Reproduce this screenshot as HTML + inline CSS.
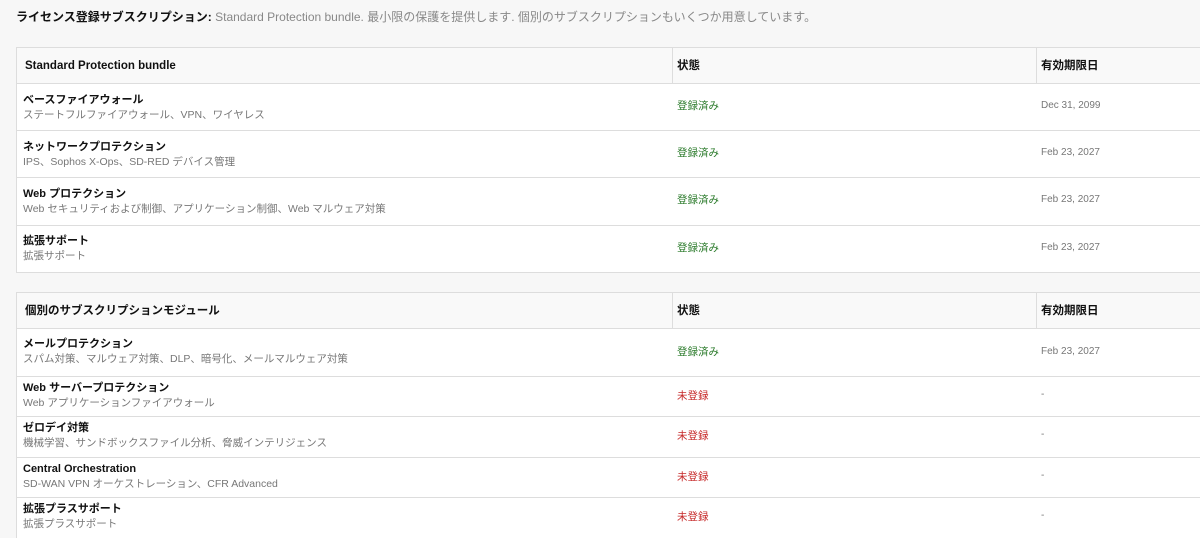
<!DOCTYPE html>
<html><head><meta charset="utf-8"><style>
*{margin:0;padding:0;box-sizing:border-box}
body{width:1200px;height:534px;overflow:hidden;background:#f7f7f7;font-family:"Liberation Sans","Noto Sans CJK JP",sans-serif;color:#111;position:relative}
div,span{line-height:14px}
.h{position:absolute;left:16px;top:10px;font-size:12px;white-space:nowrap}
.h b{font-weight:bold}
.h span{color:#888}
.t{position:absolute;left:16px;width:1200px;background:#fff;border:1px solid #ddd;border-right:none}
.r{position:relative;border-bottom:1px solid #ddd}
.hd{background:#f9f9f9;height:36px;font-weight:bold;font-size:11.5px}
.hd div{position:absolute;top:11px}
.c1{left:8px}.c2{left:660px}.c3{left:1024px}
.hd .ln{position:absolute;top:0;width:1px;height:35px;background:#ddd}
.r .a{position:absolute;left:6px;font-size:11px;font-weight:bold;white-space:nowrap}
.r .s{position:absolute;left:6px;font-size:10.5px;color:#777;white-space:nowrap}
.r .st{position:absolute;left:660px;font-size:10.5px}
.r .d{position:absolute;left:1024px;font-size:10px;color:#777}
.g{color:#2a7a2a}.rd{color:#c62828}
</style></head><body>
<div class="h"><b>ライセンス登録サブスクリプション:</b> <span>Standard Protection bundle. 最小限の保護を提供します. 個別のサブスクリプションもいくつか用意しています。</span></div>

<div class="t" style="top:47px">
<div class="r hd"><div class="c1">Standard Protection bundle</div><span class="ln" style="left:655px"></span><div class="c2">状態</div><span class="ln" style="left:1019px"></span><div class="c3">有効期限日</div></div>
<div class="r" style="height:47px"><div class="a" style="top:9px">ベースファイアウォール</div><div class="s" style="top:24px">ステートフルファイアウォール、VPN、ワイヤレス</div><div class="st g" style="top:15px">登録済み</div><div class="d" style="top:15px">Dec 31, 2099</div></div>
<div class="r" style="height:47px"><div class="a" style="top:9px">ネットワークプロテクション</div><div class="s" style="top:24px">IPS、Sophos X-Ops、SD-RED デバイス管理</div><div class="st g" style="top:15px">登録済み</div><div class="d" style="top:15px">Feb 23, 2027</div></div>
<div class="r" style="height:48px"><div class="a" style="top:9px">Web プロテクション</div><div class="s" style="top:24px">Web セキュリティおよび制御、アプリケーション制御、Web マルウェア対策</div><div class="st g" style="top:15px">登録済み</div><div class="d" style="top:15px">Feb 23, 2027</div></div>
<div class="r" style="height:46px;border-bottom:none"><div class="a" style="top:8px">拡張サポート</div><div class="s" style="top:23px">拡張サポート</div><div class="st g" style="top:15px">登録済み</div><div class="d" style="top:15px">Feb 23, 2027</div></div>
</div>

<div class="t" style="top:292px;border-bottom:none">
<div class="r hd"><div class="c1">個別のサブスクリプションモジュール</div><span class="ln" style="left:655px"></span><div class="c2">状態</div><span class="ln" style="left:1019px"></span><div class="c3">有効期限日</div></div>
<div class="r" style="height:48px"><div class="a" style="top:8px">メールプロテクション</div><div class="s" style="top:23px">スパム対策、マルウェア対策、DLP、暗号化、メールマルウェア対策</div><div class="st g" style="top:16px">登録済み</div><div class="d" style="top:16px">Feb 23, 2027</div></div>
<div class="r" style="height:40px"><div class="a" style="top:4px">Web サーバープロテクション</div><div class="s" style="top:19px">Web アプリケーションファイアウォール</div><div class="st rd" style="top:12px">未登録</div><div class="d" style="top:11px">-</div></div>
<div class="r" style="height:41px"><div class="a" style="top:4px">ゼロデイ対策</div><div class="s" style="top:19px">機械学習、サンドボックスファイル分析、脅威インテリジェンス</div><div class="st rd" style="top:12px">未登録</div><div class="d" style="top:11px">-</div></div>
<div class="r" style="height:40px"><div class="a" style="top:4px">Central Orchestration</div><div class="s" style="top:19px">SD-WAN VPN オーケストレーション、CFR Advanced</div><div class="st rd" style="top:12px">未登録</div><div class="d" style="top:11px">-</div></div>
<div class="r" style="height:40px;border-bottom:none"><div class="a" style="top:4px">拡張プラスサポート</div><div class="s" style="top:19px">拡張プラスサポート</div><div class="st rd" style="top:12px">未登録</div><div class="d" style="top:11px">-</div></div>
</div>
</body></html>
